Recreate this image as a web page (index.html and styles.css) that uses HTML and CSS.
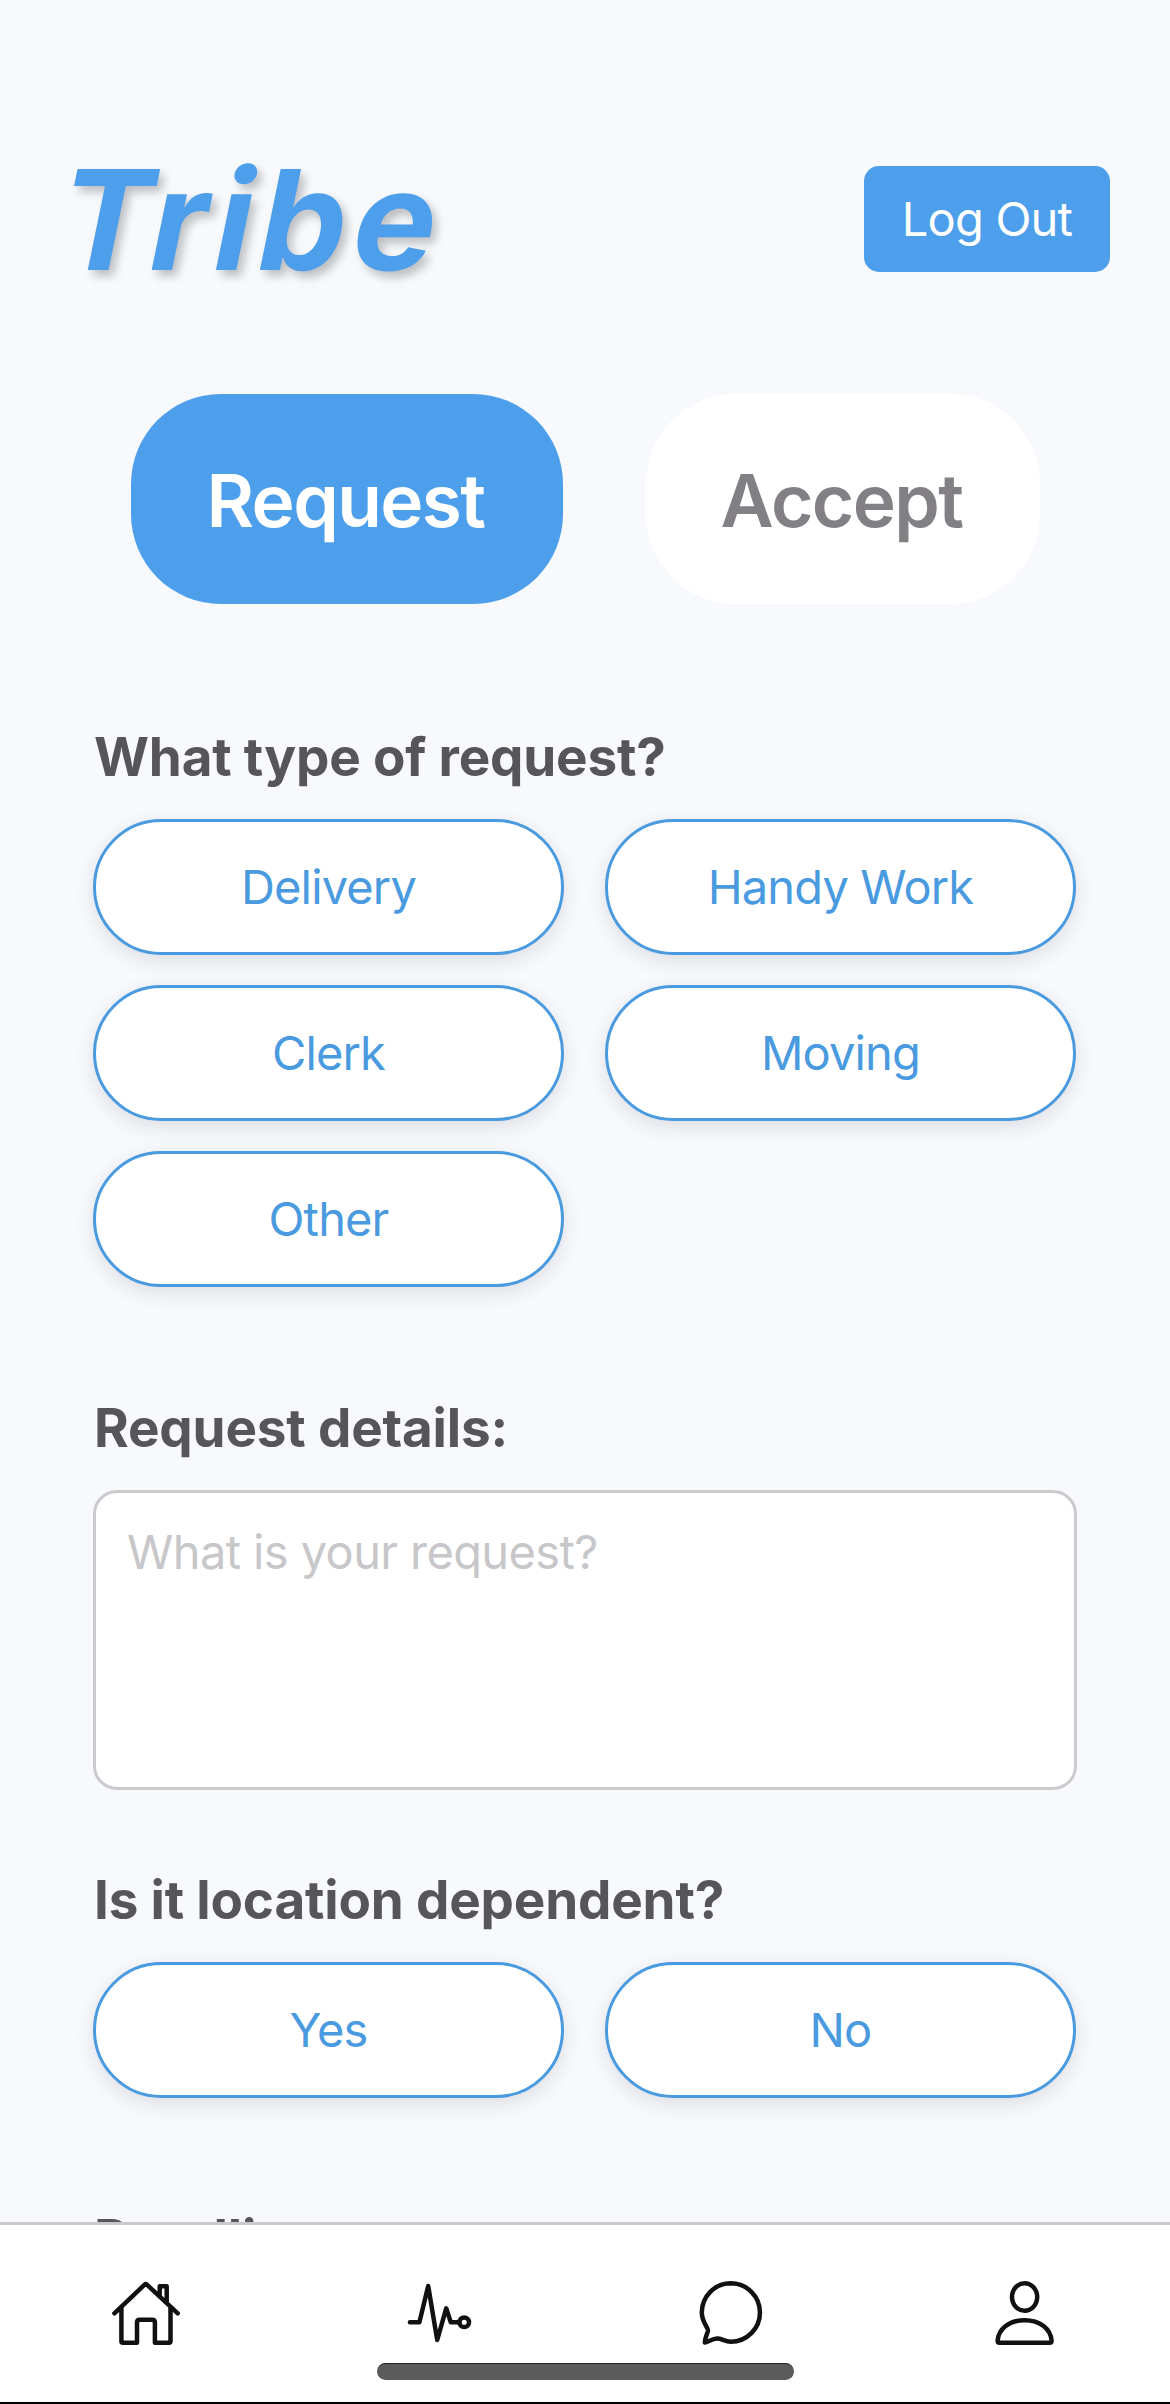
FILE: index.html
```html
<!DOCTYPE html>
<html lang="en">
<head>
<meta charset="utf-8">
<title>Tribe</title>
<link rel="stylesheet" href="styles.css">
</head>
<body>
<div class="screen">
  <main class="content">
    <header class="header">
      <h1 class="logo">Tribe</h1>
      <button class="logout">Log Out</button>
    </header>
    <div class="modes">
      <button class="mode mode-active">Request</button>
      <button class="mode mode-accept">Accept</button>
    </div>
    <section class="section">
      <h2 class="heading">What type of request?</h2>
      <div class="options">
        <button class="option">Delivery</button>
        <button class="option">Handy Work</button>
        <button class="option">Clerk</button>
        <button class="option">Moving</button>
        <button class="option">Other</button>
      </div>
    </section>
    <section class="section section-details">
      <h2 class="heading">Request details:</h2>
      <textarea class="details" placeholder="What is your request?"></textarea>
    </section>
    <section class="section section-location">
      <h2 class="heading">Is it location dependent?</h2>
      <div class="options">
        <button class="option">Yes</button>
        <button class="option">No</button>
      </div>
    </section>
    <section class="section section-deadline">
      <h2 class="heading">Deadline:</h2>
    </section>
  </main>
  <nav class="tabs">
    <a class="tab"><svg class="icon" viewBox="0 0 80 80"><path d="M8.4 40.3 38.6 11.700q1.150-1 2.300 0L71.700 40.300M15.400 35V68.200q0 1.500 1.500 1.500H31V49.500q0-2.700 2.700-2.700H46.200q2.700 0 2.700 2.700V69.700H63q1.500 0 1.500-1.500V35M53.700 23V13.300h7V29.500"/></svg></a>
    <a class="tab"><svg class="icon" viewBox="0 0 80 80"><path d="M10.900 49.300h9.500L29.200 13l9 54 9-31.700 4.600 14h8.400"/><circle cx="65.200" cy="49.300" r="4.800"/></svg></a>
    <a class="tab"><svg class="icon" viewBox="0 0 80 80"><path d="M39.750 10.300a29.200 29.200 0 1 1 0 58.400C34 68.700 30 65.300 26 65.600c-5 .4-8 3-12.200 3.900.2-5.500 2.700-8.500 3.200-12C17.300 55 10.800 49 10.800 39.500A29 29.200 0 0 1 39.750 10.300Z"/></svg></a>
    <a class="tab"><svg class="icon" viewBox="0 0 80 80"><ellipse cx="40.600" cy="24" rx="12.600" ry="13.700"/><path d="M15.600 69.700q-2 0-2-2C14.600 56 25 47.200 40.600 47.200S66.600 56 67.600 67.700q0 2-2 2Z"/></svg></a>
    <div class="home-indicator"></div>
  </nav>
</div>
</body>
</html>
```
FILE: styles.css
```css
* {
  box-sizing: border-box;
}

body {
  margin: 0;
  font-family: Inter, "Liberation Sans", sans-serif;
  background: #f7f9fd;
}

button {
  margin: 0;
  padding: 0;
  border: 0;
  font: inherit;
}

h1,
h2 {
  margin: 0;
}

.screen {
  display: flex;
  flex-direction: column;
  width: 1170px;
  height: 2404px;
  overflow: hidden;
}

.content {
  flex: 1;
  min-height: 0;
  overflow: hidden;
}

.header {
  display: flex;
  justify-content: space-between;
  align-items: center;
  height: 273px;
  padding: 165px 60px 0 62px;
}

.logo {
  font-size: 139px;
  line-height: 109px;
  font-weight: 700;
  letter-spacing: 6.5px;
  color: #4d9fec;
  text-shadow: 6px 6px 10px rgba(0, 0, 0, 0.24);
  transform: skewX(-11.6deg);
}

.logout {
  width: 246px;
  height: 106px;
  padding-bottom: 1px;
  border-radius: 15px;
  background: #4d9fec;
  color: #fff;
  font-size: 47px;
  letter-spacing: -0.8px;
}

.modes {
  display: flex;
  gap: 83px;
  margin-top: 121px;
  padding-left: 131px;
}

.mode {
  width: 394px;
  height: 210px;
  padding: 2px 3px 0 0;
  border-radius: 90px;
  background: #fff;
  color: #828084;
  font-size: 73px;
  font-weight: 600;
  letter-spacing: -1.6px;
}

.mode-active {
  width: 432px;
  background: #4d9fec;
  color: #fff;
}

.section {
  padding: 0 93px;
  margin-top: 123px;
}

.heading {
  height: 92px;
  padding-left: 1px;
  font-size: 53px;
  line-height: 61px;
  font-weight: 700;
  letter-spacing: -0.18px;
  color: #565558;
  white-space: nowrap;
}

.options {
  display: grid;
  grid-template-columns: 471px 471px;
  gap: 30px 41px;
}

.option {
  height: 136px;
  padding-bottom: 1px;
  border: 3px solid #4a9ae0;
  border-radius: 68px;
  background: #fff;
  color: #4a9ae0;
  font-size: 47px;
  letter-spacing: -0.85px;
  box-shadow: 0 6px 20px rgba(40, 30, 40, 0.12);
}

.section-details {
  margin-top: 111px;
}

.details {
  display: block;
  width: 984px;
  height: 300px;
  padding: 30px 31px;
  border: 3px solid #cbcbce;
  border-radius: 24px;
  background: #fff;
  font: 47px/58px Inter, "Liberation Sans", sans-serif;
  letter-spacing: -0.6px;
  resize: none;
}

.details::placeholder {
  color: #c7c7ca;
}

.section-location {
  margin-top: 80px;
}

.section-deadline {
  margin-top: 111px;
}

.tabs {
  position: relative;
  display: grid;
  grid-template-columns: repeat(4, 1fr);
  align-items: start;
  height: 182px;
  padding-top: 48px;
  border-top: 3px solid #c9c9cb;
  border-bottom: 2px solid #000;
  background: #fff;
}

.tab {
  display: flex;
  justify-content: center;
}

.icon {
  width: 80px;
  height: 80px;
  fill: none;
  stroke: #111114;
  stroke-width: 4.5;
  stroke-linecap: round;
  stroke-linejoin: round;
}

.home-indicator {
  position: absolute;
  left: 377px;
  bottom: 22px;
  width: 417px;
  height: 17px;
  border-radius: 9px;
  border-top: 1px solid #222;
  background: #5b5b5b;
}
```
